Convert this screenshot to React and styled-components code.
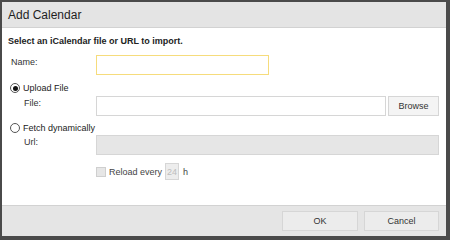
import React from "react";
import styled, { createGlobalStyle } from "styled-components";

const GlobalStyle = createGlobalStyle`
  html, body {
    margin: 0;
    padding: 0;
    background: #4a4a4a;
  }
  body {
    font-family: "Liberation Sans", Arial, sans-serif;
  }
`;

const Dialog = styled.div`
  box-sizing: border-box;
  width: 450px;
  height: 240px;
  border-style: solid;
  border-color: #4a4a4a;
  border-width: 2px 4px 4px 2px;
  background: #fff;
  display: flex;
  flex-direction: column;
`;

const Header = styled.div`
  height: 25px;
  background: #e4e4e4;
  border-bottom: 1px solid #d2d2d2;
  display: flex;
  align-items: center;
  padding-left: 6px;
  font-size: 12px;
  color: #1e1e1e;
`;

const Body = styled.div`
  flex: 1;
  display: flex;
  flex-direction: column;
  padding: 6px 7px 0 6px;
  font-size: 9px;
  color: #333;
`;

const Intro = styled.div`
  font-weight: bold;
  line-height: 14px;
  color: #222;
`;

const Row = styled.div`
  display: flex;
  align-items: flex-start;
  margin-top: ${(p) => p.$gap}px;
`;

const Label = styled.label`
  width: ${(p) => 88 - p.$indent}px;
  padding-left: ${(p) => p.$indent}px;
  line-height: 15px;
  flex-shrink: 0;
`;

const TextInput = styled.input`
  box-sizing: border-box;
  height: 20px;
  margin: 0;
  padding: 0 4px;
  font: inherit;
  flex: ${(p) => (p.$width ? "none" : "1")};
  width: ${(p) => (p.$width ? `${p.$width}px` : "auto")};
  border: 1px solid ${(p) => (p.$focus ? "#f6dc7c" : "#d6d6d6")};
  background: ${(p) => (p.disabled ? "#e6e6e6" : "#fff")};
  outline: none;
`;

const Button = styled.button`
  box-sizing: border-box;
  height: 20px;
  width: ${(p) => p.$width}px;
  margin: 0 0 0 ${(p) => p.$gap || 0}px;
  padding: 0;
  font: inherit;
  font-size: 9px;
  color: #333;
  background: ${(p) => (p.$flat ? "#f4f4f4" : "#ececec")};
  border: 1px solid #d6d6d6;
  border-radius: 0;
`;

const Choice = styled.label`
  display: flex;
  align-items: center;
  height: 12px;
  margin-top: ${(p) => p.$gap}px;
  margin-left: 2px;
  gap: 3px;
  color: #222;
`;

const Radio = styled.input.attrs({ type: "radio" })`
  appearance: none;
  box-sizing: border-box;
  width: 10px;
  height: 10px;
  margin: 0;
  border-radius: 50%;
  border: 1px solid #555;
  background: #fff;
  position: relative;
  &:checked::after {
    content: "";
    position: absolute;
    left: 1.5px;
    top: 1.5px;
    width: 5px;
    height: 5px;
    border-radius: 50%;
    background: #111;
  }
`;

const ReloadRow = styled.div`
  display: flex;
  align-items: center;
  height: 17px;
  margin-top: 8px;
  margin-left: 88px;
  color: #444;
`;

const Check = styled.input.attrs({ type: "checkbox" })`
  appearance: none;
  box-sizing: border-box;
  width: 10px;
  height: 10px;
  margin: 0 3px 0 0;
  border: 1px solid #cfcfcf;
  background: #e6e6e6;
`;

const SmallInput = styled.input`
  box-sizing: border-box;
  width: 14px;
  height: 17px;
  margin: 0 4px 0 3px;
  padding: 0;
  font: inherit;
  text-align: center;
  color: #bdbdbd;
  background: #ededed;
  border: 1px solid #d6d6d6;
`;

const Footer = styled.div`
  height: 30px;
  background: #e5e5e5;
  border-top: 1px solid #d2d2d2;
  display: flex;
  align-items: center;
  justify-content: flex-end;
  padding-right: 7px;
`;

export default function App() {
  return (
    <>
      <GlobalStyle />
      <Dialog>
        <Header>Add Calendar</Header>
        <Body>
          <Intro>Select an iCalendar file or URL to import.</Intro>
          <Row $gap={7}>
            <Label $indent={3}>Name:</Label>
            <TextInput $focus $width={173} />
          </Row>
          <Choice $gap={7}>
            <Radio name="src" defaultChecked />
            Upload File
          </Choice>
          <Row $gap={2}>
            <Label $indent={16}>File:</Label>
            <TextInput />
            <Button $width={51} $gap={2} $flat>
              Browse
            </Button>
          </Row>
          <Choice $gap={6}>
            <Radio name="src" />
            Fetch dynamically
          </Choice>
          <Row $gap={1}>
            <Label $indent={16}>Url:</Label>
            <TextInput disabled />
          </Row>
          <ReloadRow>
            <Check disabled />
            Reload every
            <SmallInput disabled defaultValue="24" />h
          </ReloadRow>
        </Body>
        <Footer>
          <Button $width={76}>OK</Button>
          <Button $width={75} $gap={6}>
            Cancel
          </Button>
        </Footer>
      </Dialog>
    </>
  );
}
